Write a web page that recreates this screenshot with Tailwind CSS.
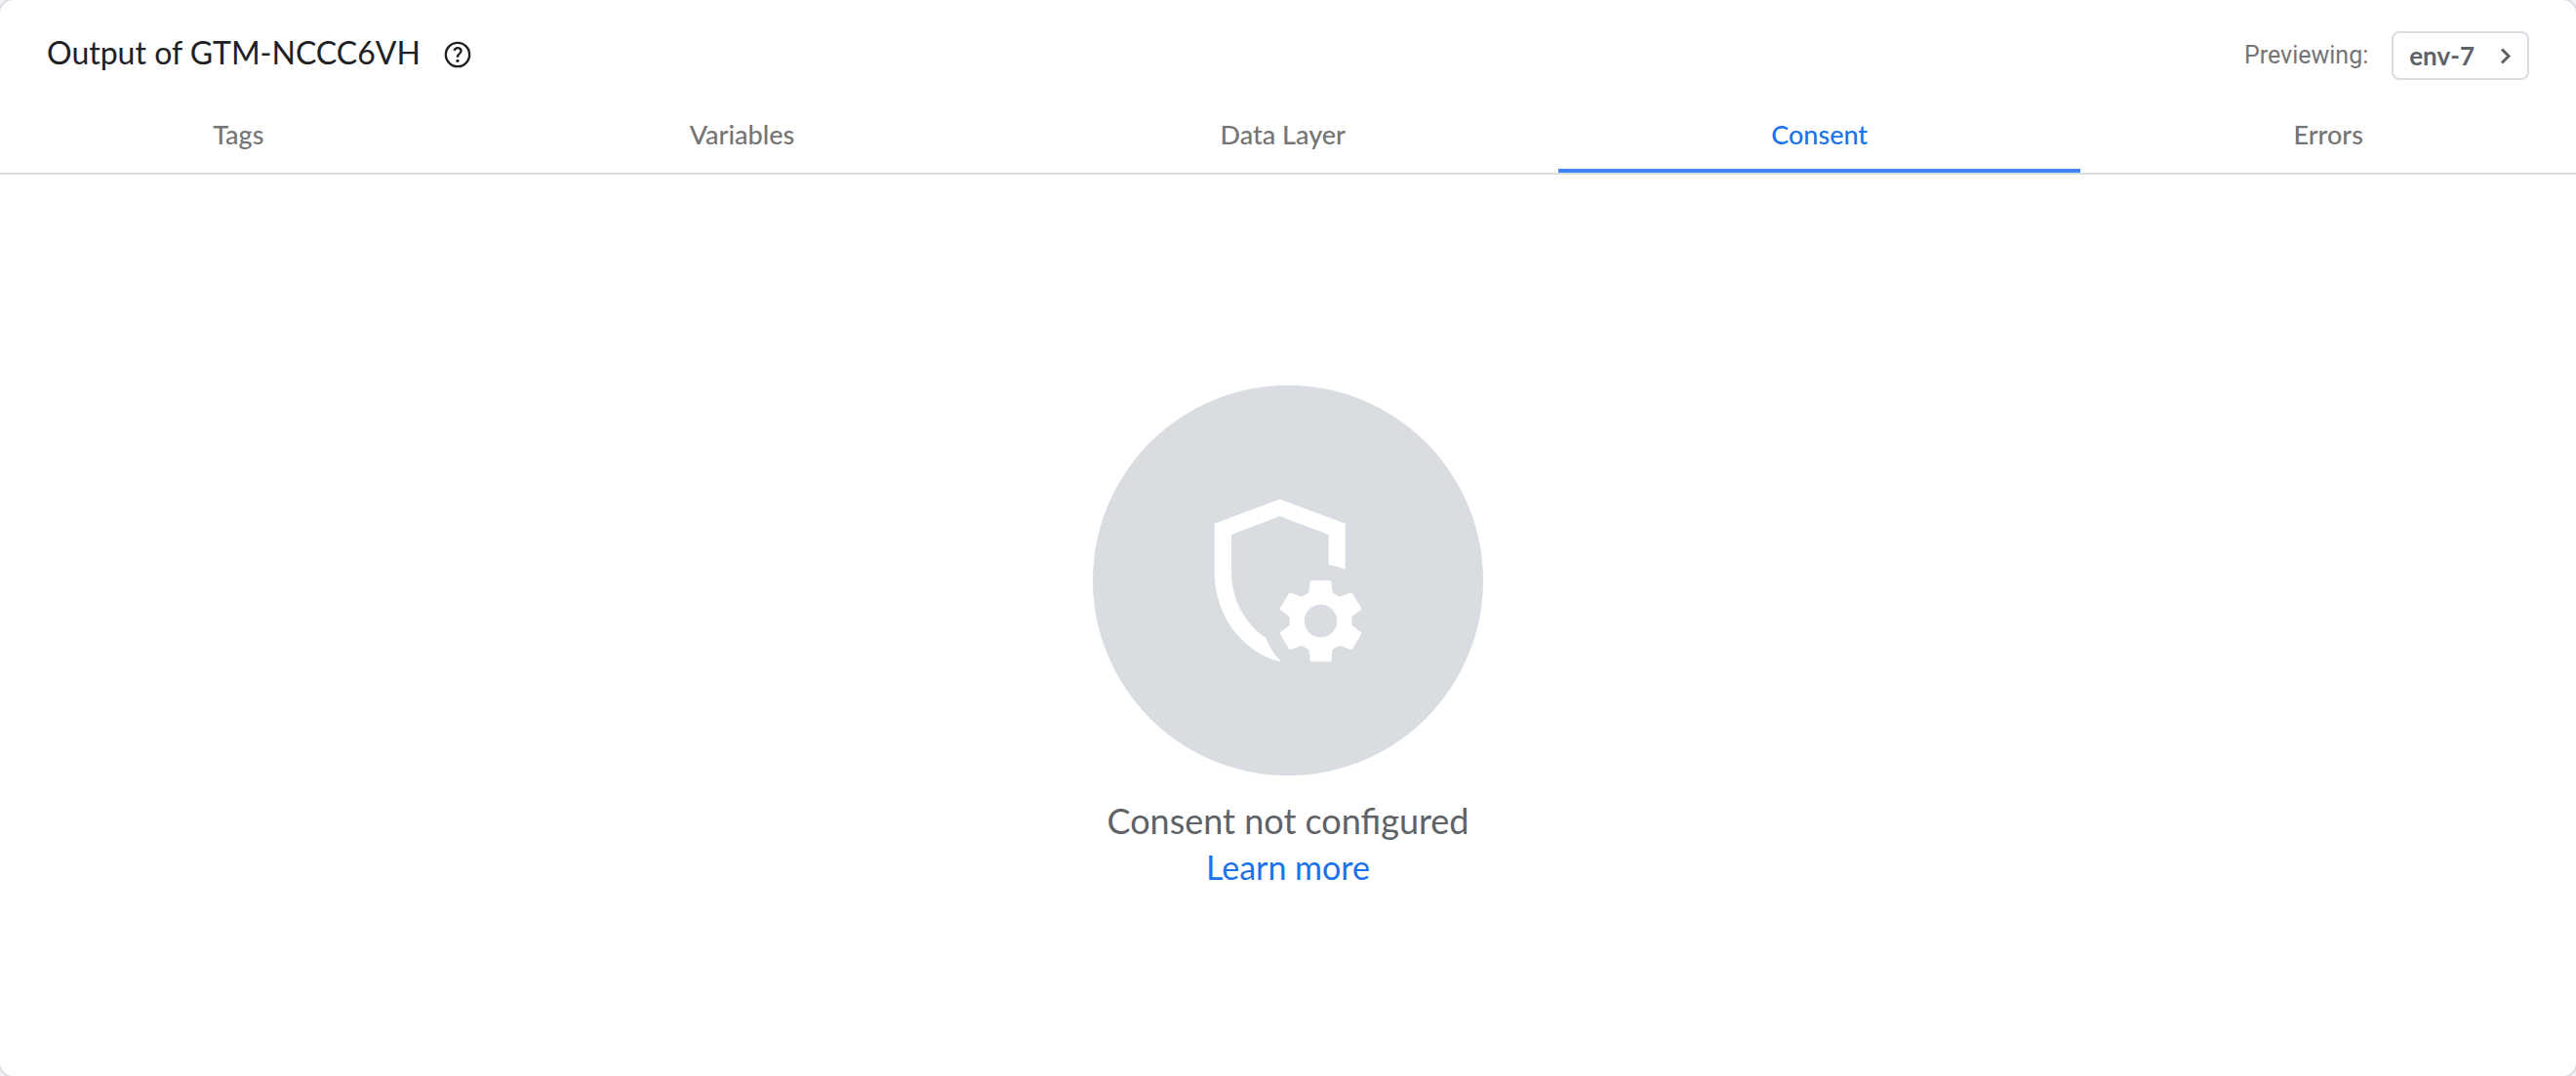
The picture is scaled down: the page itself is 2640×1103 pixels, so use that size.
<!DOCTYPE html>
<html lang="en">
<head>
<meta charset="utf-8">
<title>Tag Assistant</title>
<script src="https://cdn.jsdelivr.net/npm/@tailwindcss/browser@4"></script>
</head>
<body class="bg-[#f1f3f4] font-['Lato',sans-serif] overflow-hidden">
<main class="min-h-screen bg-white rounded-[14px] ring-2 ring-[#d9dce1] flex flex-col">
  <header class="flex items-center justify-between px-12 pt-8">
    <div class="flex items-center gap-[22px] pb-0.5">
      <h1 class="pb-1 text-[32px] leading-10 text-[#202124]">Output of GTM-NCCC6VH</h1>
      <button type="button" aria-label="Help" class="text-[#202124]">
        <svg class="size-8" viewBox="0 0 24 24" fill="currentColor"><path d="M11.950 18q.525 0 .888-.363.362-.362.362-.887t-.362-.887q-.363-.363-.888-.363t-.887.363q-.363.362-.363.887t.363.887q.362.363.887.363Zm-.9-3.850h1.850q0-.825.188-1.300.187-.475 1.062-1.300.650-.650 1.025-1.238.375-.587.375-1.412 0-1.400-1.025-2.150Q13.500 6 12.100 6q-1.425 0-2.312.750-.888.750-1.238 1.800l1.650.650q.125-.450.563-.975.437-.525 1.337-.525.800 0 1.200.438.400.437.400.962 0 .500-.300.937-.300.438-.750.813-1.100.975-1.350 1.475-.250.500-.250 1.825Z"/><circle cx="12" cy="12" r="9.1" fill="none" stroke="currentColor" stroke-width="1.8"/></svg>
      </button>
    </div>
    <div class="flex items-center gap-6">
      <span class="font-['Roboto',sans-serif] text-[25px] text-[#757575]">Previewing:</span>
      <button type="button" class="flex h-[50px] items-center gap-[18px] rounded-lg border-2 border-[#d9dce1] pl-4 pr-2 text-[26px] font-bold text-[#5f6368]">env-7
        <svg class="size-7" viewBox="0 0 28 28" fill="none" stroke="currentColor" stroke-width="3"><path d="M10 7.500 17 14.500 10 21.500"/></svg>
      </button>
    </div>
  </header>
  <nav class="flex h-[97px] border-b-2 border-[#d9dce1] text-[27px] leading-8 font-medium text-[#757575]">
    <a href="#tags" class="flex flex-auto items-center justify-center border-b-4 border-transparent pt-5">Tags</a>
    <a href="#variables" class="flex flex-auto items-center justify-center border-b-4 border-transparent pt-5">Variables</a>
    <a href="#data-layer" class="flex flex-auto items-center justify-center border-b-4 border-transparent pt-5">Data Layer</a>
    <a href="#consent" aria-current="page" class="flex flex-auto items-center justify-center border-b-4 border-[#4285f4] pt-5 text-[#1a73e8]">Consent</a>
    <a href="#errors" class="flex flex-auto items-center justify-center border-b-4 border-transparent pt-5">Errors</a>
  </nav>
  <section class="flex flex-col items-center pt-54">
    <svg class="size-100" viewBox="60 45 1200 1200" aria-hidden="true">
      <circle cx="660" cy="645" r="600" fill="#d9dce1"/>
      <g fill="#fff">
        <path d="M635 395 836 470V611Q812 601 785 597V504L635 448 486 504V621C486 706 530 781 593 823Q607 862 637 893V895C520 868 434 751 434 621V470Z"/>
        <path fill-rule="evenodd" d="M733 645H788Q792 645 793 650L797 683 819 695 851 683Q856 681 859 686L885 729Q887 733 883 736L856 757V783L883 803Q887 806 885 811L859 854Q856 859 851 857L819 845 797 857 793 890Q792 895 788 895H733Q729 895 728 890L724 857 701 845 670 857Q665 859 662 854L636 811Q633 806 637 803L665 783V757L637 736Q633 733 636 729L662 686Q665 681 670 683L701 695 724 683 728 650Q729 645 733 645ZM760.500 719.500A50 50 0 1 0 760.500 820 50 50 0 1 0 760.500 719.500Z"/>
      </g>
    </svg>
    <p class="mt-[22px] text-[36px] leading-[48px] text-[#5f6368]">Consent not configured</p>
    <a href="#learn-more" class="text-[34px] leading-[48px] text-[#1a73e8]">Learn more</a>
  </section>
</main>
</body>
</html>
